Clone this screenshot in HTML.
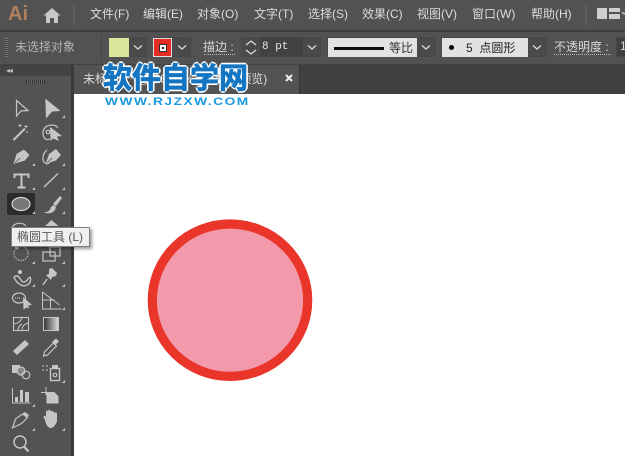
<!DOCTYPE html>
<html>
<head>
<meta charset="utf-8">
<style>
html,body{margin:0;padding:0}
body{width:625px;height:456px;overflow:hidden;position:relative;background:#fff;font-family:"Liberation Sans","Noto Sans CJK SC",sans-serif}
.a{position:absolute}
.t{position:absolute;white-space:nowrap;line-height:16px}
.m{top:6px;font-size:12px;color:#dcdcdc}
.c{font-size:12px;color:#d0d0d0}
.b{position:absolute;box-sizing:border-box;border:1px solid #474747;background:#4a4a4a;border-radius:2px}
.chev{position:absolute;width:12px;height:8px}
</style>
</head>
<body>
<div class="a" style="left:0;top:0;width:625px;height:30px;background:#525252"></div>
<div class="a" style="left:0;top:30px;width:625px;height:2px;background:#3e3e3e"></div>
<div class="a" style="left:0;top:32px;width:625px;height:32px;background:#525252"></div>
<div class="a" style="left:0;top:64px;width:625px;height:30px;background:#414141"></div>
<div class="a" style="left:0;top:64px;width:72px;height:392px;background:#535353"></div>
<div class="a" style="left:0;top:64px;width:72px;height:12px;background:#434343"></div>
<div class="a" style="left:71px;top:64px;width:3px;height:392px;background:#3a3a3a"></div>
<div class="a" style="left:74px;top:94px;width:551px;height:362px;background:#fff"></div>
<div class="a" style="left:74px;top:65px;width:225px;height:29px;background:#535353"></div>
<div class="a" style="left:299px;top:65px;width:1px;height:29px;background:#333"></div>

<div class="t" style="left:8px;top:1px;font-size:20px;line-height:26px;font-weight:bold;color:#b07f5c">Ai</div>
<svg class="a" style="left:42px;top:6px" width="20" height="18" viewBox="0 0 20 18"><path d="M1.500 9.500 10 2l8.500 7.500h-2.500v7.500h-4v-5h-4v5h-4V9.500z" fill="#c8c8c8"/></svg>
<div class="a" style="left:73px;top:5px;width:2px;height:20px;background:#606060"></div>
<div class="t m" style="left:90px">文件(F)</div>
<div class="t m" style="left:143px">编辑(E)</div>
<div class="t m" style="left:197px">对象(O)</div>
<div class="t m" style="left:254px">文字(T)</div>
<div class="t m" style="left:308px">选择(S)</div>
<div class="t m" style="left:362px">效果(C)</div>
<div class="t m" style="left:417px">视图(V)</div>
<div class="t m" style="left:472px">窗口(W)</div>
<div class="t m" style="left:531px">帮助(H)</div>
<div class="a" style="left:585px;top:5px;width:2px;height:20px;background:#606060"></div>
<svg class="a" style="left:597px;top:8px" width="28" height="12"><path d="M0 0h10v11H0zM12 0h11v4H12zM12 6h11v5H12z" fill="#cfcfcf"/><path d="M25 4l2 2 1-1" fill="none" stroke="#ccc" stroke-width="1.200"/></svg>

<div class="a" style="left:5px;top:38px;width:3px;height:19px;background:repeating-linear-gradient(#777 0 1px,#444 1px 2px)"></div>
<div class="t c" style="left:15px;top:39px;color:#b4b4b4">未选择对象</div>
<div class="a" style="left:101px;top:36px;width:1px;height:24px;background:#444"></div>
<div class="b" style="left:129px;top:37px;width:18px;height:20px"></div>
<div class="a" style="left:109px;top:38px;width:20px;height:19px;background:#d9e59b;border:0"></div>
<svg class="chev" style="left:132px;top:44px"><path d="M2 1.500 6 5l4-3.500" fill="none" stroke="#ddd" stroke-width="1.300"/></svg>
<div class="b" style="left:153px;top:37px;width:38px;height:20px"></div>
<div class="a" style="left:153px;top:38px;width:19px;height:19px;background:#e62b25;box-sizing:border-box;border:1px solid #ddd"></div>
<div class="a" style="left:160px;top:45px;width:6px;height:6px;box-sizing:border-box;border:2px solid #fff;background:#222;outline:1px solid #333"></div>
<svg class="chev" style="left:176px;top:44px"><path d="M2 1.500 6 5l4-3.500" fill="none" stroke="#ddd" stroke-width="1.300"/></svg>
<div class="t c" style="left:203px;top:39px;color:#d8d8d8">描边 :</div>
<div class="a" style="left:204px;top:54px;width:31px;border-top:1px dotted #bbb"></div>
<div class="b" style="left:241px;top:37px;width:80px;height:20px"></div>
<svg class="a" style="left:244px;top:39px" width="14" height="17"><path d="M2 6l5-4 5 4M2 11l5 4 5-4" fill="none" stroke="#ddd" stroke-width="1.200"/></svg>
<div class="a" style="left:260px;top:38px;width:43px;height:18px;background:#424242"></div>
<div class="t" style="left:262px;top:39px;font:11px/16px 'Liberation Mono',monospace;color:#e4e4e4">8 pt</div>
<svg class="chev" style="left:306px;top:44px"><path d="M2 1.500 6 5l4-3.500" fill="none" stroke="#ddd" stroke-width="1.300"/></svg>

<div class="b" style="left:327px;top:37px;width:109px;height:20px"></div>
<div class="a" style="left:328px;top:38px;width:89px;height:19px;background:#e2e2e2"></div>
<div class="a" style="left:334px;top:47px;width:50px;height:3px;background:#0b0b0b"></div>
<div class="t" style="left:389px;top:40px;font-size:12px;color:#333">等比</div>
<svg class="chev" style="left:420px;top:44px"><path d="M2 1.500 6 5l4-3.500" fill="none" stroke="#ddd" stroke-width="1.300"/></svg>
<div class="b" style="left:441px;top:37px;width:106px;height:20px"></div>
<div class="a" style="left:442px;top:38px;width:86px;height:19px;background:#e2e2e2"></div>
<div class="a" style="left:449px;top:45px;width:5px;height:5px;border-radius:50%;background:#000"></div>
<div class="t" style="left:466px;top:40px;font-size:12px;color:#222">5&nbsp; 点圆形</div>
<svg class="chev" style="left:531px;top:44px"><path d="M2 1.500 6 5l4-3.500" fill="none" stroke="#ddd" stroke-width="1.300"/></svg>
<div class="t c" style="left:554px;top:39px;color:#d8d8d8">不透明度 :</div>
<div class="a" style="left:554px;top:54px;width:57px;border-top:1px dotted #bbb"></div>
<div class="b" style="left:616px;top:37px;width:12px;height:20px;background:#3f3f3f"></div>
<div class="t" style="left:620px;top:38px;font-size:12px;color:#ddd">1</div>

<div class="t" style="left:6px;top:63px;font-size:8px;color:#bbb;letter-spacing:-1px">◂◂</div>
<div class="a" style="left:26px;top:80px;width:19px;height:4px;background:repeating-linear-gradient(90deg,#2f2f2f 0 1px,#6a6a6a 1px 2px)"></div>

<div class="t" style="left:83px;top:71px;font-size:12px;color:#ddd">未标题-1* @ 66.67% (CMYK/预览)</div>
<svg class="a" style="left:285px;top:74px" width="8" height="8"><path d="M1 1l6 6M7 1l-6 6" stroke="#eee" stroke-width="2"/></svg>

<div class="t" style="left:103px;top:60px;font-size:29px;line-height:38px;font-weight:bold;color:#1476c3;-webkit-text-stroke:.8px #1476c3;text-shadow:1px 1px 0 #fff,-1px -1px 0 #fff,1px -1px 0 #fff,-1px 1px 0 #fff,2px 0 0 #fff,-2px 0 0 #fff,0 2px 0 #fff,0 -2px 0 #fff">软件自学网</div>
<div class="t" style="left:105px;top:94px;font-size:11px;font-weight:bold;letter-spacing:1.200px;color:#1a9ae0;transform:scaleX(1.250);transform-origin:0 0;text-shadow:0 0 1px #fff">WWW.RJZXW.COM</div>

<div class="a" style="left:7px;top:193px;width:28px;height:22px;background:#2b2b2b;border-radius:2px"></div>

<svg class="a" style="left:0;top:90px" width="72" height="366" viewBox="0 90 72 366" fill="none" stroke="#c6c6c6" stroke-width="1.200">
<path d="M16.500 100.500 28 110.500 21 111 16.500 116z"/>
<path d="M46 100 59 110.500 52 111 46.500 117z" fill="#c6c6c6"/>
<path d="M13.500 140 25 128.500" stroke-width="2"/><path d="M26 125v3M24.500 126.500h3M20 124v3M18.500 125.500h3M27 131v2" stroke-width="1"/>
<path d="M50 139c-4 2-7-1-7-6 0-5 4-8 9-8 3 0 5 1 6 3"/><path d="M50 127l12 9-5 .5 2 4.500-6-2.500-2.500 2.500z" fill="#c6c6c6" stroke="none"/><circle cx="48" cy="132" r="1.800"/>
<path d="M13.500 164 16.500 154 24 149.500 29.500 155 25 160.500z" fill="#c6c6c6" stroke="none"/><path d="M15 163l5-5" stroke="#535353" stroke-width=".8"/>
<path d="M47 150c-5 4-5 11-2 13s4 0 5-2"/><path d="M45.500 164 49 154 56 149 61 155 56 160.500z" fill="#c6c6c6" stroke="none"/><path d="M47 163l5-5" stroke="#535353" stroke-width=".8"/>
<path d="M14.500 178v-3.500h14v3.500M21.500 174.500v13M17.500 187.500h8" stroke-width="2"/>
<path d="M44 187 58 173.500" stroke-width="1.400"/>
<ellipse cx="21" cy="204" rx="9" ry="6.500" fill="#777" stroke="#d0d0d0"/>
<path d="M43 212c4 1 7-1 8-5l3-2 2 2-1 3c-3 4-8 4-12 2z" fill="#c6c6c6" stroke="none"/><path d="M53 204l7-8 2 2-6 8z" fill="#c6c6c6" stroke="none"/>
<path d="M12 228a8 7 0 0 1 14-2"/><path d="M45 226l6.500-6 7 6z" fill="#c6c6c6" stroke="none"/>
<circle cx="21" cy="253.500" r="7" stroke-dasharray="1.300 1.300"/><path d="M14 247l5-2-1 5z" fill="#c6c6c6" stroke="none"/>
<rect x="43" y="252" width="12" height="9"/><rect x="50" y="247" width="10" height="9"/>
<path d="M14 277c3-3 5 0 7 3s4 3 7-1 3 0 2 3-6 5-9 3-5-3-7-8z" stroke-width="1.400"/><circle cx="20" cy="272" r="1.500" fill="#c6c6c6"/>
<path d="M49 269l3-1 5 5-1 3-4 1-1 3-5-5 3-1z" fill="#c6c6c6" stroke="none"/><path d="M47 279l-4 6" stroke-width="1.400"/>
<ellipse cx="19" cy="298" rx="6.500" ry="5"/><path d="M15 298h6" stroke-dasharray="1 1"/><path d="M23 297l9 8-4 .5 1.500 3-3-1-3 2z" fill="#c6c6c6" stroke="none"/>
<path d="M42.500 292v17h19M42.500 292l8 6v11M42.500 292l17 13M42.500 300h12" stroke-width="1"/>
<rect x="13.500" y="317.500" width="15" height="13" stroke-width="1.100"/><path d="M14 324c5-1 7-3 8-7M22 331c0-5 2-7 7-8M18 331c0-4 2-6 4-7" stroke-width="1"/>
<defs><linearGradient id="g"><stop offset="0" stop-color="#333"/><stop offset="1" stop-color="#ddd"/></linearGradient></defs>
<rect x="43.500" y="317.500" width="15" height="13" fill="url(#g)" stroke="#c6c6c6" stroke-width="1"/>
<path d="M13 351l12-11 4 4-12 11z" fill="#c6c6c6" stroke="none"/>
<path d="M43.500 356l1-4 9-9 3 3-9 9z"/><path d="M52 342l4-3.500 3 3-4 4z" fill="#c6c6c6" stroke="none"/>
<rect x="12" y="365" width="8" height="8" fill="#c6c6c6" stroke="none"/><circle cx="21" cy="371" r="4" fill="#888"/><circle cx="26" cy="375" r="3.800"/>
<rect x="50.500" y="368.500" width="9" height="12" stroke-width="1.400"/><rect x="52" y="365" width="6" height="4" fill="#c6c6c6" stroke="none"/><circle cx="55" cy="375" r="1.800"/><path d="M42 366h2M46 366h2M42 370h2M46 370h2" stroke-width="1"/>
<path d="M12.500 388v15h18" stroke-width="1"/><path d="M15 397h3v5h-3zM20 390h3v12h-3zM25 392h4v10h-4z" fill="#c6c6c6" stroke="none"/>
<path d="M41 392.500h9M46 387v8" stroke-width="1"/><path d="M47 392.500h7l4 4v6.500H47z" fill="#c6c6c6" stroke="#c6c6c6" stroke-width="1"/>
<path d="M12.500 428l3-9 7-5 5 3.500-6 6z"/><path d="M22 414l3-2 4 3-2 3z" fill="#c6c6c6" stroke="none"/>
<path d="M45 420c-2-3-2-5 0-4l1 1v-5c0-2 2-2 2 0 0-3 3-3 3 0 1-2 3-1 3 1 1-1 3-1 3 1v7c-1 4-4 7-6 7-3 0-5-3-6-8z" fill="#c6c6c6" stroke="none"/>
<circle cx="20" cy="442" r="6" stroke-width="1.500"/><path d="M24 446.500l4.500 5" stroke-width="2.200"/>
<g fill="#c6c6c6" stroke="none">
<path d="M65 115v3h-3zM35 163v3h-3zM65 163v3h-3zM35 187v3h-3zM65 187v3h-3zM35 211v3h-3zM65 211v3h-3zM35 261v3h-3zM65 261v3h-3zM35 284v3h-3zM65 284v3h-3zM65 307v3h-3zM65 380v3h-3zM35 404v3h-3zM35 428v3h-3zM65 428v3h-3z"/>
</g>
</svg>

<div class="a" style="left:11px;top:227px;width:79px;height:20px;box-sizing:border-box;border:1px solid #808080;background:#f0f0f0;box-shadow:2px 2px 3px rgba(0,0,0,.4)"></div>
<div class="t" style="left:17px;top:229px;font-size:12px;color:#555">椭圆工具 (L)</div>

<svg class="a" style="left:140px;top:210px" width="180" height="180"><ellipse cx="90" cy="90.200" rx="77.700" ry="76.200" fill="#f29aab" stroke="#e9352a" stroke-width="9.200"/></svg>
</body>
</html>
